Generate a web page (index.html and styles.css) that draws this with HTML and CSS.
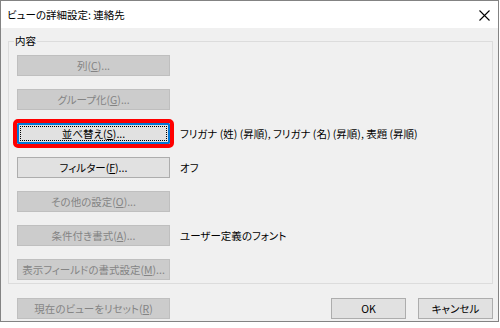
FILE: index.html
```html
<!DOCTYPE html>
<html lang="ja">
<head>
<meta charset="utf-8">
<title>ビューの詳細設定: 連絡先</title>
<link rel="stylesheet" href="styles.css">
</head>
<body>
<div class="dialog">
  <div class="titlebar">
    <span class="title">ビューの詳細設定: 連絡先</span>
    <span class="close">
      <svg width="11" height="11" viewBox="0 0 11 11"><path d="M0.5 0.5 L10.5 10.5 M10.5 0.5 L0.5 10.5" stroke="#000" stroke-width="1.1" fill="none"/></svg>
    </span>
  </div>
  <div class="content">
    <div class="group">
      <span class="legend">内容</span>
      <div class="row"><button class="btn disabled">列(<u>C</u>)...</button></div>
      <div class="row"><button class="btn disabled">グループ化(<u>G</u>)...</button></div>
      <div class="row"><button class="btn default">並べ替え(<u>S</u>)...</button><span class="desc">フリガナ (姓) (昇順), フリガナ (名) (昇順), 表題 (昇順)</span></div>
      <div class="row"><button class="btn">フィルター(<u>F</u>)...</button><span class="desc">オフ</span></div>
      <div class="row"><button class="btn disabled">その他の設定(<u>O</u>)...</button></div>
      <div class="row"><button class="btn disabled">条件付き書式(<u>A</u>)...</button><span class="desc">ユーザー定義のフォント</span></div>
      <div class="row"><button class="btn disabled">表示フィールドの書式設定(<u>M</u>)...</button></div>
    </div>
    <div class="footer">
      <button class="btn disabled">現在のビューをリセット(<u>R</u>)</button>
      <div class="spacer"></div>
      <button class="btn small">OK</button>
      <button class="btn small">キャンセル</button>
    </div>
  </div>
</div>
</body>
</html>
```

FILE: styles.css
```css
html, body {
  margin: 0;
  padding: 0;
  background: #ffffff;
}
body {
  font-family: "Noto Sans CJK JP", "Noto Sans", sans-serif;
  font-size: 10.5px;
  font-feature-settings: "palt";
  color: #000;
}
.dialog {
  width: 497px;
  height: 320px;
  border: 1px solid #838383;
  background: #f0f0f0;
  display: flex;
  flex-direction: column;
}
.titlebar {
  height: 27px;
  background: #ffffff;
  display: flex;
  align-items: center;
  justify-content: space-between;
  padding: 0 8px 0 6px;
}
.title {
  font-size: 10.5px;
  line-height: 12px;
}
.close {
  display: flex;
  margin-top: 1px;
}
.content {
  padding: 13px 5px 0 7px;
}
.group {
  position: relative;
  border: 1px solid #dcdcdc;
  padding: 13px 8px 3px 8px;
  display: flex;
  flex-direction: column;
  gap: 13px;
}
.legend {
  position: absolute;
  top: -7px;
  left: 5px;
  padding: 0 1px;
  background: #f0f0f0;
  line-height: 12px;
}
.row {
  display: flex;
  align-items: center;
}
.btn {
  box-sizing: border-box;
  width: 153px;
  height: 21px;
  margin: 0;
  padding: 0;
  font-family: inherit;
  font-size: 10.5px;
  font-feature-settings: "palt";
  line-height: 12px;
  background: #e1e1e1;
  border: 1px solid #adadad;
  color: #000;
  position: relative;
}
.btn.disabled {
  background: #cccccc;
  border-color: #bfbfbf;
  color: #848484;
}
.btn.default {
  border-color: #0078d7;
  box-shadow: inset 0 0 0 1px #0078d7;
  outline: 4px solid #ff0000;
  outline-offset: 0;
  border-radius: 1px;
}
.btn.default::after {
  content: "";
  position: absolute;
  top: 2px;
  left: 2px;
  right: 2px;
  bottom: 2px;
  border: 1px dotted #000;
}
.btn u {
  text-decoration: underline;
  text-underline-offset: 1px;
}
.desc {
  margin-left: 10px;
  line-height: 12px;
}
.footer {
  display: flex;
  margin-top: 14px;
  padding-left: 9px;
  gap: 12px;
}
.spacer {
  flex: 1;
}
.btn.small {
  width: 75px;
}
```
